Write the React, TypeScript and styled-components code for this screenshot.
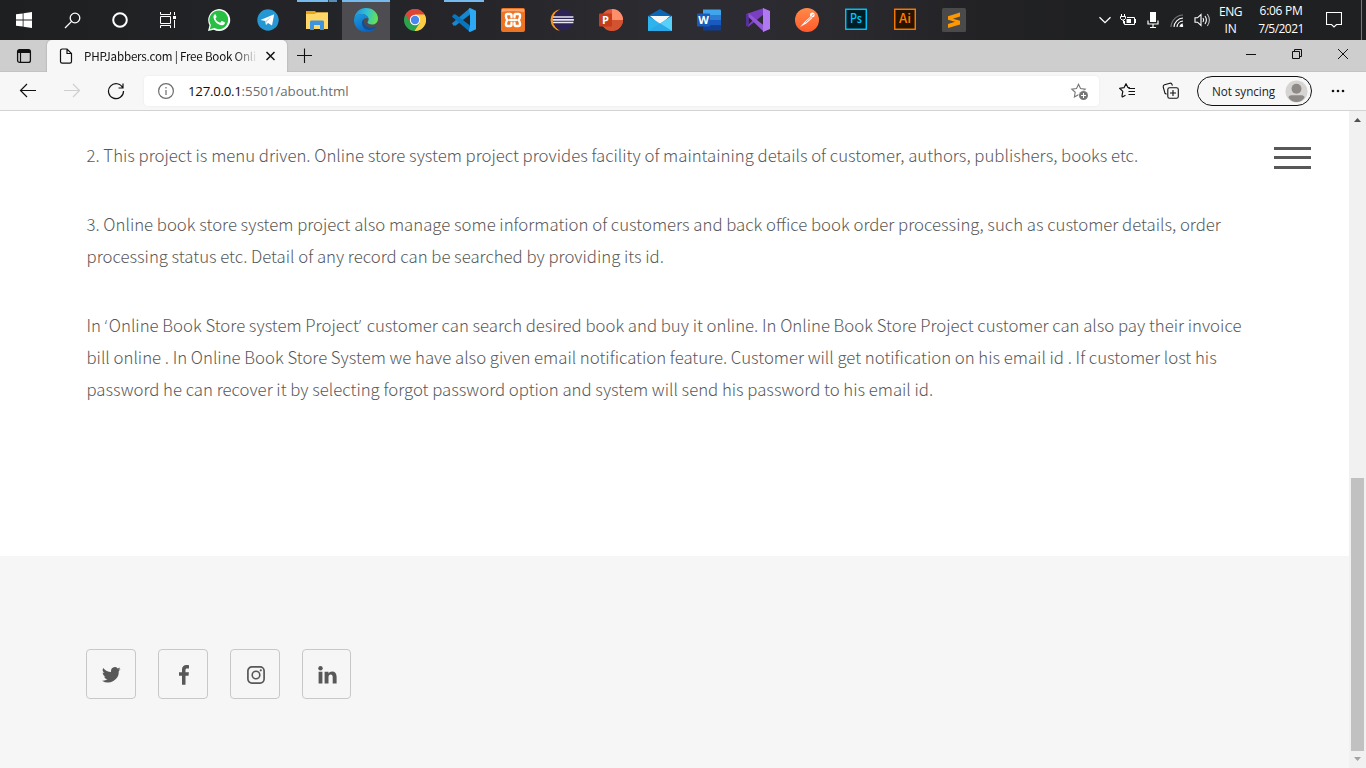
import React from "react";
import styled, { createGlobalStyle } from "styled-components";

const GlobalStyle = createGlobalStyle`
  * { box-sizing: border-box; }
  body { margin: 0; overflow: hidden; background: #fff; }
  svg { display: block; flex: none; }
`;

const Screen = styled.div`
  width: 1366px;
  height: 768px;
  display: flex;
  flex-direction: column;
  overflow: hidden;
  font-family: "Open Sans", sans-serif;
`;

/* ---------- taskbar ---------- */
const Taskbar = styled.header`
  height: 40px;
  flex: none;
  display: flex;
  justify-content: space-between;
  background: linear-gradient(90deg, #1e1f20 0, #222326 220px, #26262a 480px, #2d2c32 700px, #2a292e 850px, #222225 980px, #1f2021 1100px);
`;
const SystemButtons = styled.div`
  display: flex;
`;
const SystemButton = styled.div`
  width: 48px;
  display: grid;
  place-items: center;
`;
const Apps = styled.div`
  display: flex;
  gap: 1px;
  margin-left: 3px;
`;
const AppButton = styled.div<{ $state?: "active" | "running" | "stacked" }>`
  width: 48px;
  display: grid;
  place-items: center;
  padding-right: ${(p) => (p.$state === "stacked" ? 2 : 0)}px;
  background-color: ${(p) => (p.$state === "active" ? "#4d4d51" : "transparent")};
  background-image: ${(p) =>
    p.$state === "stacked"
      ? "linear-gradient(90deg, #76b9ed 31px, #26475e 31px, #26475e 32px, #5a8db5 32px)"
      : p.$state
        ? "linear-gradient(#76b9ed, #76b9ed)"
        : "none"};
  background-size: ${(p) => (p.$state === "active" ? "48px 2px" : "40px 2px")};
  background-position: top center;
  background-repeat: no-repeat;
`;
const Tray = styled.div`
  display: flex;
  color: #fff;
`;
const TrayCell = styled.div<{ $w: number }>`
  width: ${(p) => p.$w}px;
  display: flex;
  flex-direction: column;
  align-items: center;
  justify-content: center;
`;
const TrayText = styled.span<{ $ls?: number }>`
  font-size: 12px;
  line-height: 17px;
  letter-spacing: ${(p) => p.$ls ?? 0}px;
  white-space: nowrap;
`;
const Clock = styled.div`
  width: 68px;
  display: flex;
  flex-direction: column;
  align-items: center;
  justify-content: center;
  gap: 1px;
  padding-bottom: 1px;
`;
const ShowDesktop = styled.div`
  width: 5px;
  margin-left: 9px;
  border-left: 1px solid #77787a;
`;

/* ---------- browser chrome ---------- */
const TabStrip = styled.div`
  height: 32px;
  flex: none;
  display: flex;
  background: #cecece;
  box-shadow: inset 0 -1px 0 #c3c3c3;
`;
const TabActions = styled.div`
  width: 47px;
  display: flex;
  align-items: center;
  padding-left: 16px;
`;
const Tab = styled.div`
  width: 240px;
  display: flex;
  align-items: center;
  padding: 0 11px 0 12px;
  background: #f7f7f7;
  border-radius: 5px 5px 0 0;
  box-shadow: 0 0 2px rgba(0, 0, 0, 0.25);
  clip-path: inset(0 -3px 0 -3px);
`;
const TabTitle = styled.span`
  width: 174px;
  margin-left: 11px;
  white-space: nowrap;
  font-family: "Noto Sans CJK SC", "Open Sans", sans-serif;
  font-size: 11.6px;
  letter-spacing: -0.2px;
  line-height: 18px;
  padding-bottom: 1px;
  color: #111;
  mask-image: linear-gradient(90deg, #000 150px, transparent 174px);
`;
const CloseTab = styled.div`
  margin-left: auto;
`;
const NewTab = styled.div`
  display: flex;
  align-items: center;
  padding-left: 9px;
`;
const WindowControls = styled.div`
  margin-left: auto;
  display: flex;
`;
const WindowButton = styled.div`
  width: 46px;
  display: grid;
  place-items: center;
  padding-bottom: 4px;
`;
const Toolbar = styled.div`
  height: 39px;
  flex: none;
  display: flex;
  align-items: center;
  background: #f7f7f7;
  border-bottom: 1px solid #d3d3d3;
`;
const NavButtons = styled.div`
  width: 144px;
  display: flex;
  gap: 26px;
  padding-left: 19px;
`;
const AddressBar = styled.div`
  width: 955px;
  height: 30px;
  display: flex;
  align-items: center;
  justify-content: space-between;
  padding: 0 10px 0 13px;
  background: #fff;
  border-radius: 4px;
  box-shadow: 0 0 2px rgba(0, 0, 0, 0.08);
`;
const Address = styled.div`
  display: flex;
  align-items: center;
  font-size: 13.3px;
  color: #6d6d6d;
`;
const Host = styled.span`
  margin-left: 13px;
  color: #111;
  letter-spacing: -0.28px;
`;
const Path = styled.span`
  letter-spacing: -0.02px;
`;
const ToolbarIcons = styled.div`
  width: 98px;
  display: flex;
  gap: 26px;
  padding-left: 19px;
`;
const Profile = styled.div`
  width: 115px;
  height: 30px;
  display: flex;
  align-items: center;
  justify-content: space-between;
  padding: 0 3.5px 0 14px;
  border: 1px solid #111;
  border-radius: 15px;
  font-size: 11.7px;
  letter-spacing: -0.05px;
  color: #1c1c1c;
`;
const ProfileLabel = styled.span`
  padding-bottom: 1px;
`;
const MenuDots = styled.div`
  margin-left: 19px;
`;

/* ---------- web page ---------- */
const Viewport = styled.div`
  flex: 1;
  display: flex;
  min-height: 0;
`;
const Page = styled.div`
  flex: 1;
  display: flex;
  flex-direction: column;
`;
const Article = styled.main`
  height: 445px;
  display: flex;
  justify-content: space-between;
  padding: 28px 38px 0 86.500px;
  background: #fff;
`;
const Copy = styled.div`
  display: flex;
  flex-direction: column;
  gap: 37px;
  font-family: "Noto Sans CJK SC", "Open Sans", sans-serif;
  font-weight: 300;
  font-size: 16.75px;
  line-height: 32px;
  color: #585858;
`;
const Paragraph = styled.p`
  margin: 0;
`;
const Line = styled.span`
  display: block;
  height: 32px;
  white-space: nowrap;
`;
const Quote = styled.span`
  font-family: "Open Sans", sans-serif;
  letter-spacing: 1.7px;
`;
const MenuToggle = styled.div`
  height: 22px;
  margin-top: 7.500px;
  display: flex;
  flex-direction: column;
  justify-content: space-between;
`;
const MenuBar = styled.div`
  width: 37px;
  height: 3px;
  background: #585858;
`;
const Footer = styled.footer`
  flex: 1;
  padding: 93px 86px 0;
  background: #f6f6f6;
`;
const Socials = styled.div`
  display: flex;
  gap: 22px;
`;
const SocialLink = styled.div<{ $w?: number }>`
  width: ${(p) => p.$w ?? 50}px;
  height: 50px;
  display: grid;
  place-items: center;
  padding: 1px 0 0 1px;
  border: 1px solid #c8c8c8;
  border-radius: 4px;
  color: #585858;
`;
const Scrollbar = styled.div`
  width: 17px;
  display: flex;
  flex-direction: column;
  align-items: center;
  padding-top: 7px;
  background: #f1f1f1;
`;
const Thumb = styled.div`
  width: 13px;
  height: 273px;
  margin: 356px 0 6px;
  background: #c1c1c1;
`;

/* ---------- app icons ---------- */
const WhatsApp = () => (
  <svg width="24" height="24" viewBox="0 0 24 24">
    <path d="M1 23l1.5-5.7A11 11 0 1 1 6.8 21.700z" fill="#fff" />
    <path d="M2.800 21.200l1.100-4.200a9.400 9.400 0 1 1 3.400 3.100z" fill="#27c043" />
    <path d="M8.200 6.200c-.9.200-1.800 1.400-1.700 2.700.2 4 4.600 8.300 8.600 8.300 1.500 0 2.700-.9 2.800-2.100.1-.5 0-.7-.3-.8l-2.400-1.200c-.4-.2-.6 0-.8.200l-.9 1.100c-.2.300-.5.300-.8.200-2-.8-3.200-2.100-4.100-3.700-.1-.3 0-.5.100-.7l.8-1c.1-.2.100-.4 0-.6l-1-2.300z" fill="#fff" />
  </svg>
);
const Telegram = () => (
  <svg width="22" height="22" viewBox="0 0 22 22">
    <circle cx="11" cy="11" r="10.700" fill="#2597d3" />
    <path d="M3.500 11L17.200 5.300l-2.200 11.300-4-2.700-2 2-.7-3.800z" fill="#fff" />
    <path d="M8.300 12.100l6.600-4.700-5.300 5.400-.6 3.100z" fill="#b9d5e8" />
  </svg>
);
const Folder = () => (
  <svg width="24" height="24" viewBox="0 0 24 24">
    <path d="M2 3h9l1.500 1.500H24V21H2z" fill="#e8a317" />
    <path d="M2 6h9l1.500-1.500H24V21H2z" fill="#ffd767" />
    <path d="M6 21v-7.500l1-1h12l1 1V22h-4v-5h-6v5H6z" fill="#3c93de" />
  </svg>
);
const Edge = () => (
  <svg width="24" height="24" viewBox="0 0 24 24">
    <defs>
      <linearGradient id="edgeTop" x1="0" y1=".3" x2="1" y2=".5">
        <stop offset="0" stopColor="#1b8fe0" />
        <stop offset=".5" stopColor="#31c1d5" />
        <stop offset="1" stopColor="#66e24d" />
      </linearGradient>
      <linearGradient id="edgeSide" x1="0" y1="0" x2=".6" y2="1">
        <stop offset="0" stopColor="#1b9de2" />
        <stop offset="1" stopColor="#0b62bd" />
      </linearGradient>
    </defs>
    <path d="M.1 11C.8 4.500 5.500 0 12 0c7 0 12 5 12 10.500 0 4-2.800 6-6 6-3 0-4.500-1-4.500-2.200 0-.8 1.100-1.200 1.100-2.800C14.600 8.500 11.500 6 8 6 4 6 1.200 8.200.1 11z" fill="url(#edgeTop)" />
    <path d="M.1 11C1.200 7.700 4.200 6 7.700 6c3.600 0 6.800 2.100 6.900 5.200-1-1.300-3-1.700-4.500-.4-2.800 2.500-1.500 8 2.600 9.900 2.900 1.400 6.100.6 9.300-1.200C20 22.500 16 24 12 24 4.500 24-.6 18 .1 11z" fill="url(#edgeSide)" />
    <path d="M8.500 12.500c-1.800 4.500 1.500 9.500 6.500 9.500 3 0 5.500-1 7-2.700.5-.5 0-1-.5-.7-3.500 1.800-7.200 1.400-9.500-.6-1.800-1.600-2.600-3.800-2-6.300-.6 0-1.200.3-1.500.8z" fill="#124f9a" />
  </svg>
);
const Chrome = () => (
  <svg width="22" height="22" viewBox="0 0 22 22">
    <circle cx="11" cy="11" r="11" fill="#2ba24c" />
    <path d="M11 11L1.500 5.500A11 11 0 0 1 20.500 5.500z" fill="#de4437" />
    <path d="M11 5.500h9.500A11 11 0 0 1 10.500 22l5.300-8.300z" fill="#ffcd41" />
    <path d="M1.500 5.500l5 8.500 2-6z" fill="#de4437" />
    <circle cx="11" cy="11" r="5.200" fill="#fff" />
    <circle cx="11" cy="11" r="4.200" fill="#4a86ef" />
  </svg>
);
const VsCode = () => (
  <svg width="24" height="24" viewBox="0 0 24 24">
    <path d="M18 0L0 15.300l1.400 2.200 2 .2L18 6.500z" fill="#1588d0" />
    <path d="M18 24L0 8.800 1.400 6.500l2-.2L18 17.600z" fill="#0875bf" />
    <path d="M18 0l6 2.800v18.400L18 24l-1.300-.8L18 18V6l-1.300-5.200z" fill="#2da8f2" />
  </svg>
);
const Xampp = () => (
  <svg width="24" height="24" viewBox="0 0 24 24">
    <rect width="24" height="24" rx="2" fill="#ec7422" />
    <path d="M1 1h22v3q-11-2-22 0z" fill="#f6a573" />
    <path d="M10.500 9V7.500Q10.500 6 9 6H6.500Q5 6 5 7.500v1Q5 10.500 6.500 12 5 13.500 5 15.500v1Q5 18 6.500 18H9q1.500 0 1.500-1.500V15M13.500 9V7.500Q13.500 6 15 6h2.500Q19 6 19 7.500v1q0 2-1.500 3.500 1.500 1.500 1.500 3.500v1q0 1.500-1.500 1.500H15q-1.500 0-1.500-1.500V15M9 12h6" fill="none" stroke="#fff" strokeWidth="2.400" strokeLinecap="round" />
  </svg>
);
const Eclipse = () => (
  <svg width="24" height="24" viewBox="0 0 24 24">
    <path d="M10 1.200a10.900 10.900 0 0 0 0 21.600A12.500 12.500 0 0 1 10 1.200z" fill="#f7941e" />
    <circle cx="13.200" cy="12" r="10.500" fill="#2c2255" />
    <path d="M3 9h20.400M2.700 11.800h21.200M3 14.500h20.400" stroke="#e8e6f0" strokeWidth="1.700" />
  </svg>
);
const Badge = ({ letter, color }: { letter: string; color: string }) => (
  <g>
    <rect y="5.500" width="13" height="13" rx=".8" fill={color} />
    <text x="6.500" y="16" textAnchor="middle" fill="#fff" fontFamily="Open Sans, sans-serif" fontWeight="700" fontSize="11">
      {letter}
    </text>
  </g>
);
const PowerPoint = () => (
  <svg width="24" height="24" viewBox="0 0 24 24">
    <circle cx="13" cy="12" r="11" fill="#e0573a" />
    <path d="M13 1a11 11 0 0 1 11 11H13z" fill="#ff8f6b" />
    <path d="M24 12a11 11 0 0 1-21.500 3L13 12z" fill="#d35230" />
    <Badge letter="P" color="#c43e1c" />
  </svg>
);
const Mail = () => (
  <svg width="24" height="24" viewBox="0 0 24 24">
    <path d="M0 8L12 1l12 7v7H0z" fill="#0b66b5" />
    <path d="M2 8h20L12 17z" fill="#f5f5f5" />
    <path d="M0 8l12 7.500L24 8v15H0z" fill="#2db4ee" />
    <path d="M12 15.500L24 8v15z" fill="#57d0fa" />
    <path d="M0 23l12-7.500L24 23z" fill="#29a9e8" />
  </svg>
);
const Word = () => (
  <svg width="24" height="24" viewBox="0 0 24 24">
    <path d="M6 1.500h17q1 0 1 1V7H6z" fill="#41a5ee" />
    <path d="M6 7h18v5H6z" fill="#2b7cd3" />
    <path d="M6 12h18v5.500H6z" fill="#185abd" />
    <path d="M6 17.500h18v4q0 1-1 1H6z" fill="#103f91" />
    <Badge letter="W" color="#185abd" />
  </svg>
);
const VisualStudio = () => (
  <svg width="24" height="24" viewBox="0 0 24 24">
    <path d="M2.500 5.200L0 6.500v11l2.500 1.300L18 6V0z" fill="#7a3fc0" />
    <path d="M2.500 7.500v9L7 12z" fill="#26262a" />
    <path d="M0 6.500l2.500-1.300L18 17.500V24L2.500 9z" fill="#9256d8" />
    <path d="M0 6.500V17.500l2.500 1.300V5.200z" fill="#552f9b" />
    <path d="M17 0l7 3v18l-7 3z" fill="#b179f1" />
  </svg>
);
const Postman = () => (
  <svg width="24" height="24" viewBox="0 0 24 24">
    <defs>
      <linearGradient id="postman" x1="0" y1="0" x2="0" y2="1">
        <stop offset="0" stopColor="#ff8a4a" />
        <stop offset="1" stopColor="#ff5a2c" />
      </linearGradient>
    </defs>
    <circle cx="12" cy="12" r="12" fill="url(#postman)" />
    <path d="M5 19l4.500-5 6-5.500 1.700 1.700-6 5.300z" fill="#fff" />
    <circle cx="17.300" cy="7" r="2.400" fill="#fff" />
    <path d="M10.500 14.500l5.500-5M16.500 8.500l2-2.500" stroke="#ff7a42" strokeWidth=".9" />
  </svg>
);
const AdobeTile = ({ label, color, fill }: { label: string; color: string; fill: string }) => (
  <svg width="22" height="24" viewBox="0 0 22 24">
    <rect x=".75" y="1.250" width="20.500" height="20" fill={fill} stroke={color} strokeWidth="1.400" />
    <text x="11" y="15.300" textAnchor="middle" textLength="12" lengthAdjust="spacingAndGlyphs" fill={color} fontFamily="Noto Sans CJK SC, sans-serif" fontWeight="500" fontSize="12.500">
      {label}
    </text>
  </svg>
);
const Sublime = () => (
  <svg width="24" height="24" viewBox="0 0 24 24">
    <rect width="24" height="24" rx="1.500" fill="#4a4a4a" />
    <path d="M6 8.200L18 4.500v4L10.800 10.700 18 12.800v3.700L6 20v-4l7.200-2.200L6 11.800z" fill="#ff9800" />
  </svg>
);

const apps: { icon: React.ReactNode; state?: "active" | "running" | "stacked" }[] = [
  { icon: <WhatsApp /> },
  { icon: <Telegram /> },
  { icon: <Folder />, state: "stacked" },
  { icon: <Edge />, state: "active" },
  { icon: <Chrome /> },
  { icon: <VsCode />, state: "running" },
  { icon: <Xampp /> },
  { icon: <Eclipse /> },
  { icon: <PowerPoint /> },
  { icon: <Mail /> },
  { icon: <Word /> },
  { icon: <VisualStudio /> },
  { icon: <Postman /> },
  { icon: <AdobeTile label="Ps" color="#00c8ff" fill="#001d26" /> },
  { icon: <AdobeTile label="Ai" color="#ff7c00" fill="#261300" /> },
  { icon: <Sublime /> },
];

const DesktopTaskbar = () => (
  <Taskbar>
    <SystemButtons>
      <SystemButton>
        <svg width="16" height="16" viewBox="0 0 16 16" fill="#fff">
          <path d="M0 2.300L6.700 1.400V7.600H0zM7.500 1.300L16 0v7.600H7.500zM0 8.400h6.700v6.200L0 13.700zM7.500 8.400H16V16l-8.500-1.200z" />
        </svg>
      </SystemButton>
      <SystemButton>
        <svg width="17" height="17" viewBox="0 0 17 17" fill="none" stroke="#fff" strokeWidth="1.300">
          <circle cx="11" cy="6" r="4.800" />
          <path d="M7.600 9.400L1 16" />
        </svg>
      </SystemButton>
      <SystemButton>
        <svg width="18" height="18" viewBox="0 0 18 18">
          <circle cx="9" cy="9" r="6.800" fill="none" stroke="#fff" strokeWidth="2" />
        </svg>
      </SystemButton>
      <SystemButton>
        <svg width="16" height="16" viewBox="0 0 16 16" fill="none" stroke="#fff">
          <path d="M.5 0v2.500h10V0M.5 16v-2.500h10V16M.5 4.500h10v7H.5zM14.500 0v3M14.500 8v8" />
          <path d="M13 4h3v3h-3z" fill="#fff" stroke="none" />
        </svg>
      </SystemButton>
      <Apps>
        {apps.map((app, i) => (
          <AppButton key={i} $state={app.state}>
            {app.icon}
          </AppButton>
        ))}
      </Apps>
    </SystemButtons>
    <Tray>
      <TrayCell $w={20}>
        <svg width="12" height="8" viewBox="0 0 12 8" fill="none" stroke="#fff" strokeWidth="1.300">
          <path d="M.5 1.200L6 6.700l5.500-5.500" />
        </svg>
      </TrayCell>
      <TrayCell $w={26}>
        <svg width="16" height="14" viewBox="0 0 16 14" fill="none" stroke="#fff">
          <path d="M1.500 1v2M4.500 1v2M.5 3.500h5v2l-1.500 1.500h-2L.5 5.500zM3.500 7v3.500M7 4.500h7.500v7h-10V8M15.500 6v4" />
          <path d="M6.500 6H11v4H6.500z" fill="#fff" stroke="none" />
        </svg>
      </TrayCell>
      <TrayCell $w={23}>
        <svg width="12" height="16" viewBox="0 0 12 16">
          <path d="M3 0h6v10H3z" fill="#fff" />
          <path d="M1 8.500v3.500h10V8.500M6 12v3.500M3 15.500h6" fill="none" stroke="#fff" strokeWidth="1.200" />
        </svg>
      </TrayCell>
      <TrayCell $w={26}>
        <svg width="14" height="14" viewBox="0 0 14 14" fill="none" stroke="#fff" strokeWidth="1.100">
          <path d="M1 14A12.500 12.500 0 0 1 13 2" stroke="#77787a" />
          <path d="M4 14a9.500 9.500 0 0 1 9-9M7 14a6.500 6.500 0 0 1 6-6" />
          <path d="M10 14a3.500 3.500 0 0 1 3-3" />
          <circle cx="12" cy="13" r="1.200" fill="#fff" stroke="none" />
        </svg>
      </TrayCell>
      <TrayCell $w={24}>
        <svg width="17" height="14" viewBox="0 0 17 14" fill="none" stroke="#fff" strokeWidth="1.100">
          <path d="M1 4.800h2.500L7 1.500v11L3.500 9.200H1z" />
          <path d="M9 5q1.300 2 0 4M11 3q2.800 4 0 8" />
          <path d="M13.300 1q4.200 6 0 12" stroke="#bbb" />
        </svg>
      </TrayCell>
      <TrayCell $w={33}>
        <TrayText $ls={-0.45}>ENG</TrayText>
        <TrayText $ls={-0.2}>IN</TrayText>
      </TrayCell>
      <Clock>
        <TrayText $ls={-0.3}>6:06 PM</TrayText>
        <TrayText $ls={-0.55}>7/5/2021</TrayText>
      </Clock>
      <TrayCell $w={37}>
        <svg width="16" height="16" viewBox="0 0 16 16" fill="none" stroke="#fff">
          <path d="M.5 .5h15v12h-5L8 15l-2.500-2.500h-5z" strokeWidth="1.100" />
        </svg>
      </TrayCell>
      <ShowDesktop />
    </Tray>
  </Taskbar>
);

const starPath = "M7.500 1.200l2 4.300 4.700.6-3.400 3.200.8 4.600-4.100-2.200-4.100 2.200.8-4.600L.800 6.100l4.700-.6z";

const BrowserChrome = () => (
  <>
    <TabStrip>
      <TabActions>
        <svg width="16" height="16" viewBox="0 0 16 16">
          <rect x="1.600" y="1.600" width="12.800" height="12.800" rx="2" fill="none" stroke="#111" strokeWidth="1.300" />
          <path d="M1.500 3.500a2 2 0 0 1 2-2h9a2 2 0 0 1 2 2V5h-13z" fill="#111" />
          <path d="M4.500 5v9.500" stroke="#111" strokeWidth="1.200" />
        </svg>
      </TabActions>
      <Tab>
        <svg width="14" height="16" viewBox="0 0 14 16" fill="none" stroke="#111" strokeWidth="1.200">
          <path d="M3.200 1H8l4.500 4.500v8a1.700 1.700 0 0 1-1.700 1.700H3.200a1.700 1.700 0 0 1-1.700-1.700V2.700A1.700 1.700 0 0 1 3.200 1zM8 1v4.500h4.500" />
        </svg>
        <TabTitle>PHPJabbers.com | Free Book Onli</TabTitle>
        <CloseTab>
          <svg width="11" height="10" viewBox="0 0 11 10" stroke="#111" strokeWidth="1.500">
            <path d="M1.500 1l8 8M9.500 1l-8 8" />
          </svg>
        </CloseTab>
      </Tab>
      <NewTab>
        <svg width="16" height="16" viewBox="0 0 16 16" stroke="#111" strokeWidth="1.100">
          <path d="M8.500 .5v14.500M1 7.500h15" />
        </svg>
      </NewTab>
      <WindowControls>
        <WindowButton>
          <svg width="10" height="10" viewBox="0 0 10 10" stroke="#111">
            <path d="M0 5.500h10" />
          </svg>
        </WindowButton>
        <WindowButton>
          <svg width="10" height="10" viewBox="0 0 10 10" fill="none" stroke="#111">
            <path d="M.5 2.500h7v7h-7zM2.500 2.500v-2h7v7h-2" />
          </svg>
        </WindowButton>
        <WindowButton>
          <svg width="10" height="10" viewBox="0 0 10 10" stroke="#111">
            <path d="M0 0l10 10M10 0L0 10" />
          </svg>
        </WindowButton>
      </WindowControls>
    </TabStrip>
    <Toolbar>
      <NavButtons>
        <svg width="18" height="18" viewBox="0 0 18 18" fill="none" stroke="#111" strokeWidth="1.200">
          <path d="M17 8.500H1.500M8 2L1.500 8.500 8 15" />
        </svg>
        <svg width="18" height="18" viewBox="0 0 18 18" fill="none" stroke="#cfcfcf" strokeWidth="1.200">
          <path d="M1 8.500h15.500M10 2L16.500 8.500 10 15" />
        </svg>
        <svg width="18" height="18" viewBox="0 0 18 18" fill="none" stroke="#111" strokeWidth="1.200">
          <path d="M15.800 6A7.500 7.500 0 1 0 16.500 9M16 1.500V6h-4.500" />
        </svg>
      </NavButtons>
      <AddressBar>
        <Address>
          <svg width="18" height="18" viewBox="0 0 18 18" fill="none" stroke="#6d6d6d" strokeWidth="1.200">
            <circle cx="9" cy="9" r="7.400" />
            <path d="M9 8v5M9 5v1.500" />
          </svg>
          <Host>127.0.0.1</Host>
          <Path>:5501/about.html</Path>
        </Address>
        <svg width="19" height="18" viewBox="0 0 19 18">
          <path d={starPath} transform="translate(1 1)" fill="none" stroke="#767676" strokeWidth="1.100" />
          <circle cx="13.500" cy="13.500" r="5.200" fill="#fff" />
          <circle cx="13.500" cy="13.500" r="4.500" fill="#767676" />
          <path d="M13.500 11v5M11 13.500h5" stroke="#fff" />
        </svg>
      </AddressBar>
      <ToolbarIcons>
        <svg width="18" height="18" viewBox="0 0 18 18" fill="none" stroke="#111" strokeWidth="1.200">
          <path d="M11.800 5.600l-1.900-.2L8 1.700 6 5.700l-4.400.6 3.200 3.100L4 13.800l.3 1.200 3.200-1.700" strokeLinejoin="round" />
          <path d="M10.500 6.500H17M10.500 9.500H17M10.500 12.500H17" />
        </svg>
        <svg width="18" height="18" viewBox="0 0 18 18" fill="none" stroke="#111" strokeWidth="1.100">
          <path d="M4.500 12.200L3 11.300 1.200 4.800Q1 3.200 2.500 2.700L8 1.200q1.500-.3 2 1.200l.4 1.200M4.500 12.200" />
          <rect x="5.800" y="5.800" width="10.500" height="10.500" rx="1.800" />
          <path d="M11 8v6M8 11h6" />
        </svg>
      </ToolbarIcons>
      <Profile>
        <ProfileLabel>Not syncing</ProfileLabel>
        <svg width="23" height="23" viewBox="0 0 23 23">
          <circle cx="11.500" cy="11.500" r="11" fill="#d6d4d2" />
          <circle cx="11.500" cy="8.800" r="5" fill="#8e8a87" />
          <path d="M3.500 17.800q0-2.600 3-2.600h10q3 0 3 2.600-3 4.200-8 4.200t-8-4.200z" fill="#8e8a87" />
        </svg>
      </Profile>
      <MenuDots>
        <svg width="14" height="4" viewBox="0 0 14 4" fill="#111">
          <circle cx="2" cy="2" r="1.300" />
          <circle cx="7" cy="2" r="1.300" />
          <circle cx="12" cy="2" r="1.300" />
        </svg>
      </MenuDots>
    </Toolbar>
  </>
);

const TwitterIcon = () => (
  <svg width="19" height="16" viewBox="0 0 24 20" fill="currentColor">
    <path d="M23.600 2.400c-.9.400-1.800.7-2.800.8 1-.6 1.800-1.600 2.100-2.700-.9.600-2 1-3.100 1.200A4.850 4.850 0 0 0 11.500 6.100 13.700 13.700 0 0 1 1.600 1a4.850 4.850 0 0 0 1.500 6.500c-.8 0-1.500-.2-2.200-.6v.1c0 2.300 1.700 4.300 3.900 4.700-.7.200-1.500.2-2.200.1.600 1.900 2.400 3.300 4.500 3.400A9.700 9.700 0 0 1 0 17.200 13.800 13.800 0 0 0 21.200 4.900c1-.7 1.800-1.500 2.400-2.500z" />
  </svg>
);
const FacebookIcon = () => (
  <svg width="12" height="20" viewBox="0 0 12 20" fill="currentColor">
    <path d="M11 .2v3.200H9.200C7.800 3.400 7.500 4.100 7.500 5v2.200h3.400l-.4 3.500H7.500V19.800H4v-9.100H1V7.200h3V4.600C4 1.600 5.800 0 8.500 0c1.200 0 2.200.1 2.500.2z" />
  </svg>
);
const InstagramIcon = () => (
  <svg width="18" height="18" viewBox="0 0 18 18" fill="none" stroke="currentColor">
    <rect x=".9" y=".9" width="16.200" height="16.200" rx="4" strokeWidth="1.700" />
    <circle cx="9" cy="9" r="3.800" strokeWidth="1.600" />
    <circle cx="13.800" cy="4.300" r="1.100" fill="currentColor" stroke="none" />
  </svg>
);
const LinkedInIcon = () => (
  <svg width="19" height="18" viewBox="0 0 19 18" fill="currentColor">
    <circle cx="2.500" cy="2.300" r="2.200" />
    <path d="M.6 5.800h3.800V17.500H.6zM6.600 5.800h3.900v1.700c.7-1.100 1.800-2 3.600-2 2.700 0 4.500 1.800 4.500 5.200v6.800h-3.900v-6.300c0-1.600-.6-2.600-2-2.600-1.300 0-2.200 1-2.200 2.600v6.300H6.600z" />
  </svg>
);

export default function App() {
  return (
    <Screen>
      <GlobalStyle />
      <DesktopTaskbar />
      <BrowserChrome />
      <Viewport>
        <Page>
          <Article>
            <Copy>
              <Paragraph>
                <Line>2. This project is menu driven. Online store system project provides facility of maintaining details of customer, authors, publishers, books etc.</Line>
              </Paragraph>
              <Paragraph>
                <Line>3. Online book store system project also manage some information of customers and back office book order processing, such as customer details, order</Line>
                <Line>processing status etc. Detail of any record can be searched by providing its id.</Line>
              </Paragraph>
              <Paragraph>
                <Line>
                  In <Quote>‘</Quote>Online Book Store system Project<Quote>’</Quote> customer can search desired book and buy it online. In Online Book Store Project customer can also pay their invoice
                </Line>
                <Line>bill online . In Online Book Store System we have also given email notification feature. Customer will get notification on his email id . If customer lost his</Line>
                <Line>password he can recover it by selecting forgot password option and system will send his password to his email id.</Line>
              </Paragraph>
            </Copy>
            <MenuToggle>
              <MenuBar />
              <MenuBar />
              <MenuBar />
            </MenuToggle>
          </Article>
          <Footer>
            <Socials>
              <SocialLink>
                <TwitterIcon />
              </SocialLink>
              <SocialLink>
                <FacebookIcon />
              </SocialLink>
              <SocialLink>
                <InstagramIcon />
              </SocialLink>
              <SocialLink $w={49}>
                <LinkedInIcon />
              </SocialLink>
            </Socials>
          </Footer>
        </Page>
        <Scrollbar>
          <svg width="7" height="4" viewBox="0 0 7 4" fill="#505050">
            <path d="M0 4l3.500-4L7 4z" />
          </svg>
          <Thumb />
          <svg width="7" height="4" viewBox="0 0 7 4" fill="#a3a3a3">
            <path d="M0 0h7L3.500 4z" />
          </svg>
        </Scrollbar>
      </Viewport>
    </Screen>
  );
}
